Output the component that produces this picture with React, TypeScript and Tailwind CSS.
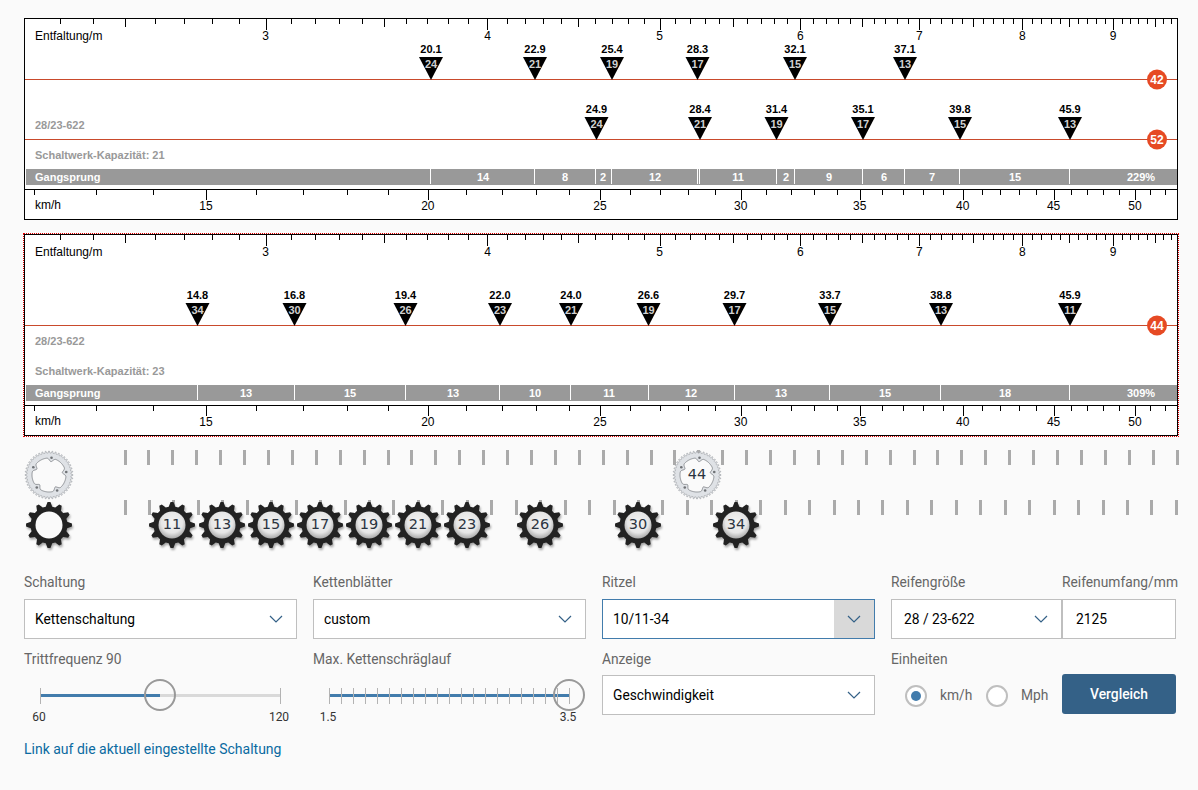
const SCALE = 771.6;
const entX = (d: number) => 265.5 + SCALE * Math.log(d / 3);
const speedX = (v: number) => 205.5 + SCALE * Math.log(v / 15);

const sans = { fontFamily: '"Liberation Sans", Arial, sans-serif' };

interface Mark {
  x: number;
  speed: string;
  teeth: number;
}

interface Ring {
  y: number;
  label: number;
  marks: Mark[];
}

interface Step {
  x: number;
  label: string;
}

function Ticks() {
  const top: number[] = [];
  for (let i = 23; i <= 97; i++) top.push(i);
  return (
    <>
      {top.map((t) => {
        const x = Math.round(entX(t / 10)) - 25 + 0.5;
        const h = t % 10 === 0 ? 11 : t % 5 === 0 ? 8 : 5;
        return <line key={t} x1={x} x2={x} y1={0} y2={h} stroke="#000" />;
      })}
    </>
  );
}

function BottomTicks({ y }: { y: number }) {
  const items: number[] = [];
  for (let i = 12; i <= 52; i++) items.push(i);
  return (
    <>
      {items.map((v) => {
        const x = Math.round(speedX(v) + 0.5) - 25 + 0.5;
        return <line key={v} x1={x} x2={x} y1={y} y2={y + (v % 5 === 0 ? 10 : 5)} stroke="#000" />;
      })}
    </>
  );
}

function Chart({ rings, steps, edges, range, capacity, barY, height }: {
  rings: Ring[];
  steps: Step[];
  edges: number[];
  range: string;
  capacity: string;
  barY: number;
  height: number;
}) {
  const tops = [3, 4, 5, 6, 7, 8, 9];
  const speeds = [15, 20, 25, 30, 35, 40, 45, 50];
  return (
    <svg width={1152} height={height} style={sans} className="block">
      <rect x={0} y={0} width={1152} height={height} fill="#fff" />
      <Ticks />
      <text x={10} y={21} fontSize={12}>Entfaltung/m</text>
      {tops.map((d) => (
        <text key={d} x={entX(d) - 25} y={21} fontSize={12} textAnchor="middle">{d}</text>
      ))}
      {rings.map((r) => (
        <g key={r.label}>
          <line x1={0} x2={1152} y1={r.y + 0.5} y2={r.y + 0.5} stroke="#c94a2c" />
          {r.marks.map((m) => {
            const x = m.x - 25;
            return (
              <g key={m.teeth}>
                <text x={x} y={r.y - 26} fontSize={11} fontWeight={700} textAnchor="middle">{m.speed}</text>
                <polygon points={`${x - 12},${r.y - 22} ${x + 12},${r.y - 22} ${x},${r.y + 1}`} fill="#000" />
                <text x={x} y={r.y - 11} fontSize={11} fontWeight={700} fill="#d0d0d0" textAnchor="middle">{m.teeth}</text>
              </g>
            );
          })}
          <circle cx={1132} cy={r.y + 0.5} r={10} fill="#e64a24" />
          <text x={1132} y={r.y + 4.5} fontSize={12} fontWeight={700} fill="#fff" textAnchor="middle">{r.label}</text>
        </g>
      ))}
      <text x={10} y={110} fontSize={11} fontWeight={700} fill="#999">{range}</text>
      <text x={10} y={barY - 10} fontSize={11} fontWeight={700} fill="#999">{capacity}</text>
      <rect x={1} y={barY} width={1151} height={16} fill="#999" />
      <text x={10} y={barY + 12} fontSize={11} fontWeight={700} fill="#fff">Gangsprung</text>
      {edges.map((e) => {
        const x = e - 25 + 0.5;
        return <line key={e} x1={x} x2={x} y1={barY} y2={barY + 15} stroke="#fff" />;
      })}
      {steps.map((s) => (
        <text key={s.x} x={s.x - 25} y={barY + 12} fontSize={11} fontWeight={700} fill="#fff" textAnchor="middle">{s.label}</text>
      ))}
      <line x1={0} x2={1152} y1={barY + 20.5} y2={barY + 20.5} stroke="#000" />
      <BottomTicks y={barY + 21} />
      <text x={10} y={barY + 40} fontSize={12}>km/h</text>
      {speeds.map((v) => (
        <text key={v} x={speedX(v) - 24.6} y={barY + 41} fontSize={12} textAnchor="middle">{v}</text>
      ))}
    </svg>
  );
}

function polar(r: number, a: number) {
  return `${(r * Math.cos(a)).toFixed(2)},${(r * Math.sin(a)).toFixed(2)}`;
}

function GearLabel({ teeth }: { teeth: number }) {
  return (
    <span className="absolute inset-0 flex items-center justify-center text-[14.5px] text-[#2b3440]" style={{ fontFamily: '"DejaVu Sans", sans-serif' }}>
      {teeth}
    </span>
  );
}

function Sprocket({ x, teeth }: { x: number; teeth?: number }) {
  const n = 12;
  const pts: string[] = [];
  for (let i = 0; i < n; i++) {
    const a = (i / n) * Math.PI * 2 - Math.PI / 2;
    const s = (Math.PI * 2) / n;
    pts.push(polar(18.5, a - s * 0.34), polar(23, a - s * 0.12), polar(23, a + s * 0.12), polar(18.5, a + s * 0.34));
  }
  return (
    <div className="absolute top-[50px] h-[50px] w-[50px]" style={{ left: x - 25 }}>
      <svg width={50} height={50} viewBox="-25 -25 50 50" className="absolute inset-0 drop-shadow-[1px_2px_1px_rgba(0,0,0,0.35)]">
        <defs>
          <radialGradient id="hub" cx="50%" cy="40%" r="60%">
            <stop offset="0%" stopColor="#f4f4f4" />
            <stop offset="65%" stopColor="#e6e6e6" />
            <stop offset="100%" stopColor="#a9a9a9" />
          </radialGradient>
        </defs>
        <polygon points={pts.join(" ")} fill="#222" />
        <circle r={13.5} fill={teeth ? "url(#hub)" : "#fafafa"} />
      </svg>
      {teeth && <GearLabel teeth={teeth} />}
    </div>
  );
}

function Chainring({ x, teeth }: { x: number; teeth?: number }) {
  const n = 44;
  const phase = 0.17;
  const pts: string[] = [];
  for (let i = 0; i < n; i++) {
    const s = (Math.PI * 2) / n;
    const a = i * s;
    pts.push(polar(22, a - s * 0.3), polar(24, a - s * 0.1), polar(24, a + s * 0.1), polar(22, a + s * 0.3));
  }
  const inner: string[] = [];
  for (let i = 0; i < 180; i++) {
    const a = (i / 180) * Math.PI * 2;
    const t = Math.max(0, Math.cos(5 * (a + phase)));
    inner.push(polar(17 - 3.5 * t * t * t, a));
  }
  const bolts = [0, 1, 2, 3, 4].map((i) => (i / 5) * Math.PI * 2 - phase);
  return (
    <div className="absolute top-0 h-[50px] w-[50px]" style={{ left: x - 25 }}>
      <svg width={50} height={50} viewBox="-25 -25 50 50" className="absolute inset-0">
        <polygon points={pts.join(" ")} fill="#dfe2e6" stroke="#9a9da2" strokeWidth={0.6} />
        <polygon points={inner.join(" ")} fill="#fafafa" stroke="#85888c" strokeWidth={0.9} />
        {bolts.map((a) => {
          const [cx, cy] = polar(17.5, a).split(",");
          return <circle key={a} cx={cx} cy={cy} r={1.3} fill="#6f7276" />;
        })}
      </svg>
      {teeth && <GearLabel teeth={teeth} />}
    </div>
  );
}

function Chevron() {
  return (
    <svg width={14} height={8} viewBox="0 0 14 8" fill="none" stroke="#346187" strokeWidth={1.2}>
      <path d="M1 1l6 6 6-6" />
    </svg>
  );
}

function Select({ value, focused, inset }: { value: string; focused?: boolean; inset?: string }) {
  return (
    <div className={`flex h-10 items-stretch border bg-white ${focused ? "border-[#427cac]" : "border-[#bfbfbf]"}`}>
      <span className={`flex flex-1 items-center text-[13.8px] text-black ${inset ?? "pl-[10px]"}`}>{value}</span>
      <span className={`flex w-10 items-center justify-center ${focused ? "bg-[#d9d9d9]" : ""}`}>
        <Chevron />
      </span>
    </div>
  );
}

function Label({ children, tight }: { children: string; tight?: boolean }) {
  return <div className={`h-5 whitespace-nowrap text-[13.8px] leading-5 text-[#666] ${tight ? "mb-[6px]" : "mb-[7px]"}`}>{children}</div>;
}

function Slider({ fill, ticks, lo, hi }: { fill: number; ticks: number; lo: string; hi: string }) {
  const stops = Array.from({ length: ticks + 1 }, (_, i) => i / ticks);
  return (
    <div className="pl-4 pt-1">
      <div className="relative h-[46px] w-[240px]">
        <div className="absolute left-0 right-0 top-[15px] h-[3px] bg-[#d9d9d9]" />
        <div className="absolute left-0 top-[15px] h-[3px] bg-[#427cac]" style={{ width: `${fill * 100}%` }} />
        {stops.map((s) => (
          <div key={s} className="absolute top-[9px] h-4 w-px bg-[#b3b3b3]" style={{ left: `${s * 100}%` }} />
        ))}
        <div className="absolute top-0 h-8 w-8 -translate-x-1/2 rounded-full border-2 border-[#999]" style={{ left: `${fill * 100}%` }} />
        <span className="absolute -ml-px left-0 top-[30px] -translate-x-1/2 text-[12px] leading-4 text-[#333]">{lo}</span>
        <span className="absolute -ml-px left-full top-[30px] -translate-x-1/2 text-[12px] leading-4 text-[#333]">{hi}</span>
      </div>
    </div>
  );
}

function Radio({ on, label }: { on?: boolean; label: string }) {
  return (
    <div className="flex items-center">
      <span className="flex h-[22px] w-[22px] items-center justify-center rounded-full border-2 border-[#bfbfbf] bg-white">
        {on && <span className="h-[10px] w-[10px] rounded-full bg-[#427cac]" />}
      </span>
      <span className="ml-[13px] text-[13.8px] text-[#666]">{label}</span>
    </div>
  );
}

const ring42: Ring = {
  y: 60,
  label: 42,
  marks: [
    { x: 431, speed: "20.1", teeth: 24 }, { x: 535, speed: "22.9", teeth: 21 }, { x: 612, speed: "25.4", teeth: 19 },
    { x: 697.5, speed: "28.3", teeth: 17 }, { x: 795, speed: "32.1", teeth: 15 }, { x: 905, speed: "37.1", teeth: 13 },
  ],
};
const ring52: Ring = {
  y: 120,
  label: 52,
  marks: [
    { x: 596.5, speed: "24.9", teeth: 24 }, { x: 700, speed: "28.4", teeth: 21 }, { x: 776.5, speed: "31.4", teeth: 19 },
    { x: 863, speed: "35.1", teeth: 17 }, { x: 960, speed: "39.8", teeth: 15 }, { x: 1070, speed: "45.9", teeth: 13 },
  ],
};
const ring44: Ring = {
  y: 90,
  label: 44,
  marks: [
    { x: 197.5, speed: "14.8", teeth: 34 }, { x: 294.5, speed: "16.8", teeth: 30 }, { x: 405.5, speed: "19.4", teeth: 26 },
    { x: 500, speed: "22.0", teeth: 23 }, { x: 571, speed: "24.0", teeth: 21 }, { x: 648.5, speed: "26.6", teeth: 19 },
    { x: 734.5, speed: "29.7", teeth: 17 }, { x: 830, speed: "33.7", teeth: 15 }, { x: 941, speed: "38.8", teeth: 13 },
    { x: 1070, speed: "45.9", teeth: 11 },
  ],
};

const steps1: Step[] = [
  { x: 483, label: "14" }, { x: 565, label: "8" }, { x: 603, label: "2" }, { x: 655, label: "12" },
  { x: 738, label: "11" }, { x: 786, label: "2" }, { x: 829, label: "9" }, { x: 884, label: "6" },
  { x: 932, label: "7" }, { x: 1015, label: "15" }, { x: 1141, label: "229%" },
];
const steps2: Step[] = [
  { x: 246, label: "13" }, { x: 350, label: "15" }, { x: 453, label: "13" }, { x: 535, label: "10" },
  { x: 609, label: "11" }, { x: 691, label: "12" }, { x: 781, label: "13" }, { x: 885, label: "15" },
  { x: 1005, label: "18" }, { x: 1141, label: "309%" },
];

const rowOne = Array.from({ length: 45 }, (_, i) => Math.round(124.5 + i * 23.91));
const rowTwo = Array.from({ length: 44 }, (_, i) => Math.round(124.5 + i * 24.45));

const sprockets = [[172, 11], [222, 13], [271, 15], [320, 17], [369, 19], [418, 21], [467, 23], [540, 26], [638, 30], [736, 34]];

export default function App() {
  return (
    <div className="min-h-[790px] bg-[#fafafa] pl-6 pt-[18px]" style={{ fontFamily: "Roboto, sans-serif" }}>
      <div className="w-[1154px] border border-black">
        <Chart
          rings={[ring42, ring52]}
          steps={steps1}
          edges={[430, 534, 595, 611, 697, 699, 776, 794, 862, 904, 959, 1069]}
          range="28/23-622"
          capacity="Schaltwerk-Kapazität: 21"
          barY={150}
          height={200}
        />
      </div>
      <div className="mt-[14px] w-[1154px] border border-black outline-1 outline-dotted outline-[#e00000]">
        <Chart
          rings={[ring44]}
          steps={steps2}
          edges={[197, 294, 405, 499, 570, 648, 734, 829, 940, 1069]}
          range="28/23-622"
          capacity="Schaltwerk-Kapazität: 23"
          barY={150}
          height={200}
        />
      </div>

      <div className="relative -ml-6 mt-[14px] h-[100px] w-[1198px]">
        {rowOne.map((x) => (
          <div key={x} className="absolute top-0 h-[15px] w-[3px] bg-[#aaa]" style={{ left: x - 1 }} />
        ))}
        {rowTwo.map((x) => (
          <div key={x} className="absolute top-[50px] h-[15px] w-[3px] bg-[#aaa]" style={{ left: x - 1 }} />
        ))}
        <Chainring x={49} />
        <Chainring x={697} teeth={44} />
        <Sprocket x={49} />
        {sprockets.map(([x, t]) => (
          <Sprocket key={t} x={x} teeth={t} />
        ))}
      </div>

      <div className="mt-[22px] grid w-[1152px] grid-cols-[273px_273px_273px_285px] gap-x-4">
        <div>
          <Label>Schaltung</Label>
          <Select value="Kettenschaltung" />
        </div>
        <div>
          <Label>Kettenblätter</Label>
          <Select value="custom" />
        </div>
        <div>
          <Label>Ritzel</Label>
          <Select value="10/11-34" focused />
        </div>
        <div className="flex">
          <div className="w-[171px]">
            <Label>Reifengröße</Label>
            <Select value="28 / 23-622" inset="pl-[12px]" />
          </div>
          <div className="w-[114px]">
            <Label>Reifenumfang/mm</Label>
            <div className="flex h-10 items-center border border-[#bfbfbf] bg-white pl-[13px] text-[13.8px] text-black">2125</div>
          </div>
        </div>

        <div className="mt-[10px]">
          <Label tight>Trittfrequenz 90</Label>
          <Slider fill={0.5} ticks={1} lo="60" hi="120" />
        </div>
        <div className="mt-[10px]">
          <Label tight>Max. Kettenschräglauf</Label>
          <Slider fill={1} ticks={20} lo="1.5" hi="3.5" />
        </div>
        <div className="mt-[10px]">
          <Label tight>Anzeige</Label>
          <Select value="Geschwindigkeit" />
        </div>
        <div className="mt-[10px]">
          <Label tight>Einheiten</Label>
          <div className="-mt-px flex items-center">
            <div className="ml-[14px] mt-[3px] flex w-[81px]"><Radio on label="km/h" /></div>
            <div className="mt-[3px]"><Radio label="Mph" /></div>
            <button className="ml-auto h-10 w-[114px] rounded-[3px] bg-[#346187] text-[13.8px] font-medium text-white">Vergleich</button>
          </div>
        </div>
      </div>

      <a className="mt-[14px] block text-[14px] leading-5 text-[#0a6aa1]">Link auf die aktuell eingestellte Schaltung</a>
    </div>
  );
}
